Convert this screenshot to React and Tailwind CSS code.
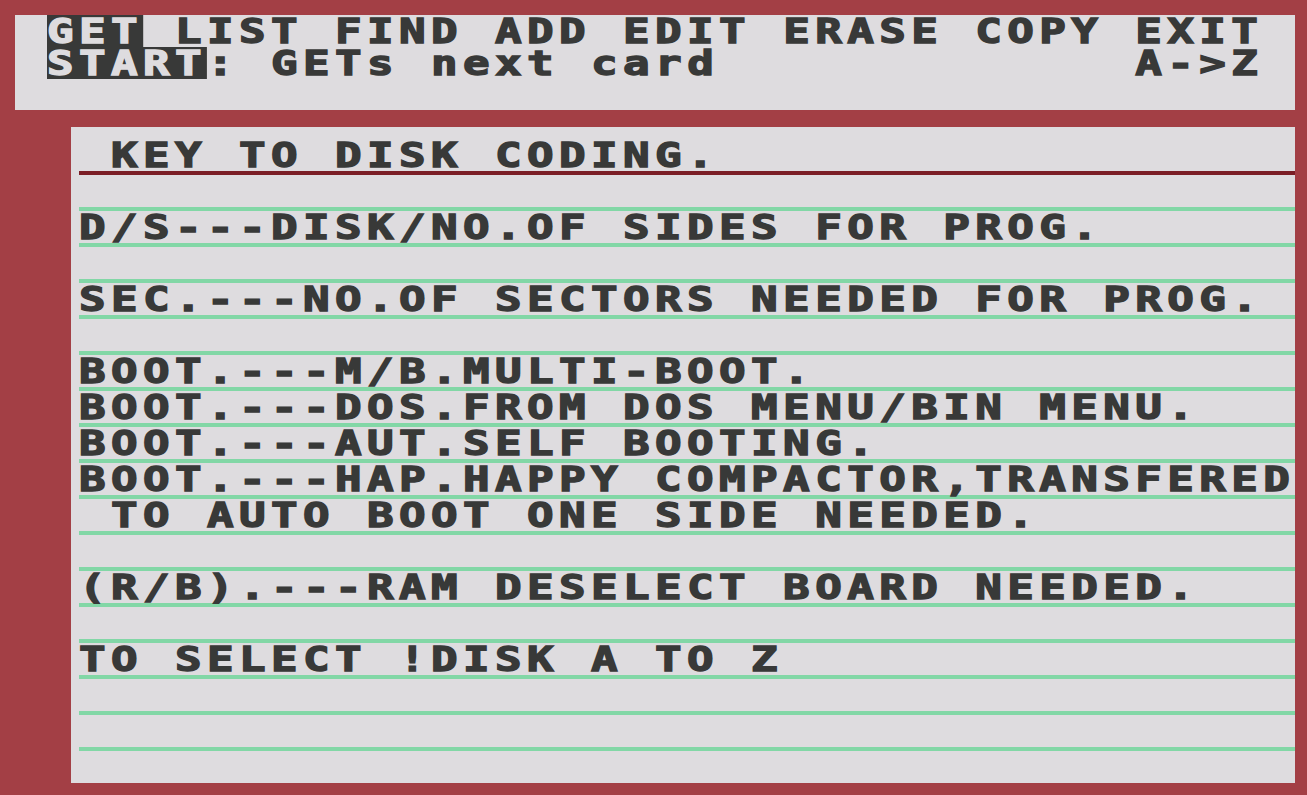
const FONT = { fontFamily: '"DejaVu Sans Mono", "Liberation Mono", monospace' };

const rows = [
  'D/S---DISK/NO.OF SIDES FOR PROG.',
  '',
  'SEC.---NO.OF SECTORS NEEDED FOR PROG.',
  '',
  'BOOT.---M/B.MULTI-BOOT.',
  'BOOT.---DOS.FROM DOS MENU/BIN MENU.',
  'BOOT.---AUT.SELF BOOTING.',
  'BOOT.---HAP.HAPPY COMPACTOR,TRANSFERED',
  ' TO AUTO BOOT ONE SIDE NEEDED.',
  '',
  '(R/B).---RAM DESELECT BOARD NEEDED.',
  '',
  'TO SELECT !DISK A TO Z',
  '',
  '',
  '',
];

// chunky, wide glyphs like the 8-bit character set
function Chars({ children }) {
  return (
    <span className="inline-block h-[32px] origin-left scale-x-[1.3] whitespace-pre [-webkit-text-stroke-width:1.4px]">
      {children}
    </span>
  );
}

function Inverse({ children }) {
  return <span className="inline-block h-[32px] bg-[#383938] text-[#dedcdf]">{children}</span>;
}

export default function App() {
  return (
    <div
      className="w-[1307px] h-[795px] overflow-hidden bg-[#a33f45] pt-[15px] pl-[15px] text-[#383938] font-bold text-[34px] leading-[32px] tracking-[4.15px]"
      style={FONT}
    >
      {/* menu bar */}
      <div className="w-[1280px] h-[95px] bg-[#dedcdf] pl-[32px] overflow-hidden">
        <div className="h-[32px]">
          <Chars>
            <Inverse>GET</Inverse>{' LIST FIND ADD EDIT ERASE COPY EXIT'}
          </Chars>
        </div>
        <div className="h-[32px]">
          <Chars>
            <Inverse>START</Inverse>{': GETs next card             A->Z'}
          </Chars>
        </div>
      </div>

      {/* card */}
      <div className="mt-[17px] ml-[56px] w-[1224px] h-[656px] bg-[#dedcdf] pl-[8px] flex flex-col overflow-hidden">
        <div className="h-[80px] pt-[12px]">
          <div className="h-[32px]">
            <Chars>{' KEY TO DISK CODING.'}</Chars>
          </div>
          <div className="h-[4px] bg-[#7b1e26]" />
        </div>
        {rows.map((text, i) => (
          <div key={i} className="h-[36px] border-t-4 border-[#82d7a6]">
            <Chars>{text}</Chars>
          </div>
        ))}
      </div>
    </div>
  );
}
